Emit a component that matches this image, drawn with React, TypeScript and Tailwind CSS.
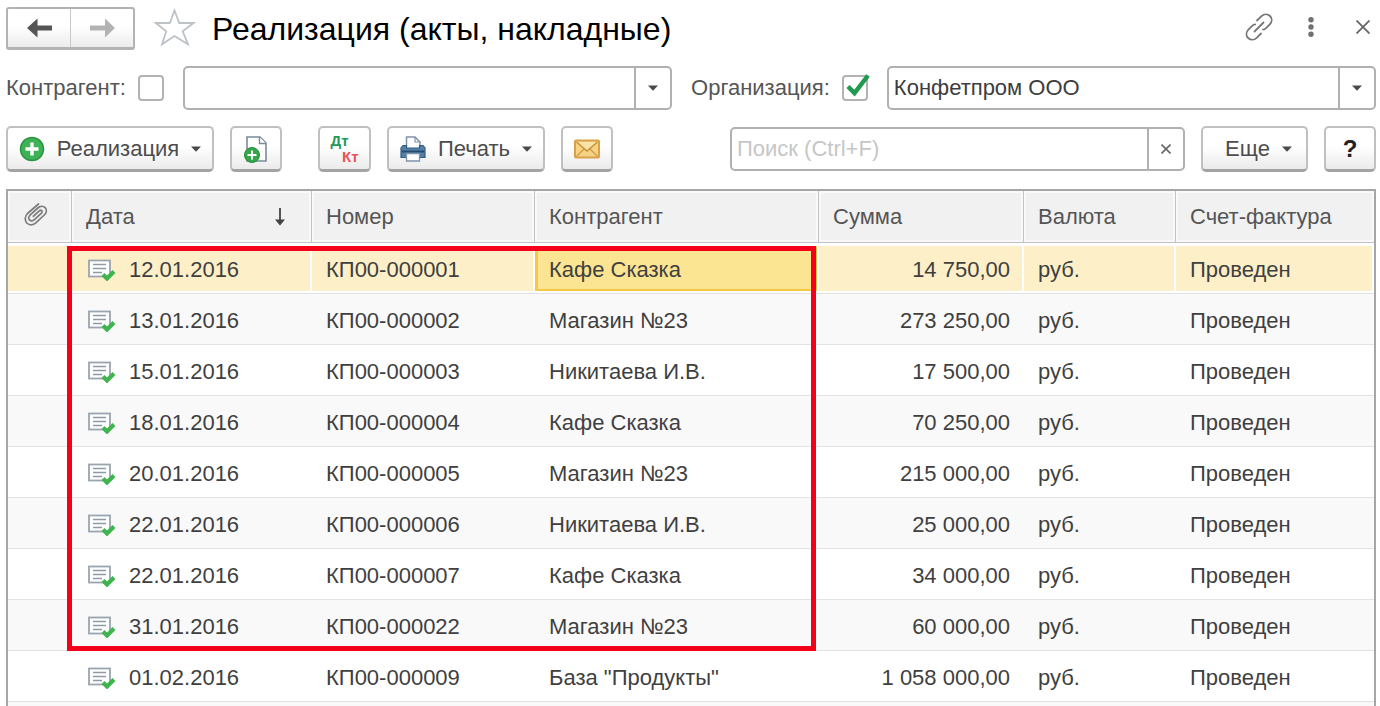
import { useState } from "react";
import type { ReactNode } from "react";

const documents = [
  { date: "12.01.2016", number: "КП00-000001", partner: "Кафе Сказка", sum: "14 750,00" },
  { date: "13.01.2016", number: "КП00-000002", partner: "Магазин №23", sum: "273 250,00" },
  { date: "15.01.2016", number: "КП00-000003", partner: "Никитаева И.В.", sum: "17 500,00" },
  { date: "18.01.2016", number: "КП00-000004", partner: "Кафе Сказка", sum: "70 250,00" },
  { date: "20.01.2016", number: "КП00-000005", partner: "Магазин №23", sum: "215 000,00" },
  { date: "22.01.2016", number: "КП00-000006", partner: "Никитаева И.В.", sum: "25 000,00" },
  { date: "22.01.2016", number: "КП00-000007", partner: "Кафе Сказка", sum: "34 000,00" },
  { date: "31.01.2016", number: "КП00-000022", partner: "Магазин №23", sum: "60 000,00" },
  { date: "01.02.2016", number: "КП00-000009", partner: 'База "Продукты"', sum: "1 058 000,00" },
];

const selectedCell =
  "bg-[#fdf0c9] shadow-[inset_-2px_-2px_0_0_#fff,inset_0_3px_0_0_#fff]";
const activeCell =
  "bg-[#fbe492] shadow-[inset_-2px_-2px_0_0_#fff,inset_0_3px_0_0_#fff,inset_3px_5px_0_0_#f5c943,inset_-4px_-4px_0_0_#f5c943]";

function Caret() {
  return (
    <svg width="10" height="6" viewBox="0 0 10 6" className="shrink-0" aria-hidden="true">
      <path d="M0 0.5h10L5 5.8z" fill="#4a4a4a" />
    </svg>
  );
}

function ToolButton({ label, className, children }: { label?: string; className: string; children: ReactNode }) {
  return (
    <button
      type="button"
      aria-label={label}
      className={`flex h-[46px] shrink-0 items-center justify-center rounded-[5px] border-2 border-b-[3px] border-[#c0c0c0] border-b-[#a3a3a3] bg-linear-to-b from-white from-45% to-[#ebebeb] text-[#4d4d4d] ${className}`}
    >
      {children}
    </button>
  );
}

function FilterCheckbox({ id, label, checked, onChange }: { id: string; label: string; checked: boolean; onChange: (v: boolean) => void }) {
  return (
    <div className="flex shrink-0 items-center gap-3">
      <label htmlFor={id} className="text-[#555]">
        {label}
      </label>
      <span className="relative flex">
        <input
          id={id}
          type="checkbox"
          checked={checked}
          onChange={(e) => onChange(e.target.checked)}
          className="size-[26px] appearance-none rounded-[4px] border-2 border-[#b3b3b3] bg-white"
        />
        {checked && (
          <svg width="26" height="26" viewBox="0 0 26 26" className="pointer-events-none absolute inset-0 overflow-visible" aria-hidden="true">
            <path d="M6 11.5l6.500 6.500L26 0.500" fill="none" stroke="#1f9a4f" strokeWidth="4.500" />
          </svg>
        )}
      </span>
    </div>
  );
}

function Combo({ label, value }: { label: string; value: string }) {
  return (
    <div className="relative flex h-11 min-w-0 flex-1">
      <select
        aria-label={label}
        defaultValue={value}
        className="w-full appearance-none rounded-[5px] border-2 border-[#b0b0b0] bg-white pr-10 pl-[5px] text-[#3d3d3d]"
      >
        <option value={value}>{value}</option>
      </select>
      <span className="pointer-events-none absolute inset-y-0.5 right-0.5 flex w-9 items-center justify-center border-l-2 border-[#b0b0b0]">
        <Caret />
      </span>
    </div>
  );
}

function DocumentIcon() {
  return (
    <svg width="28" height="22" viewBox="0 0 28 22" className="shrink-0" aria-hidden="true">
      <rect x="1" y="1.500" width="21" height="16" fill="#fff" stroke="#9aa5b0" strokeWidth="1.800" />
      <path d="M5 5.500h13M5 9.500h13M5 13.500h9" stroke="#8e9aa6" strokeWidth="1.600" />
      <path d="M15 15.500l4 4 7-7" fill="none" stroke="#3fb44f" strokeWidth="4.200" />
    </svg>
  );
}

function PaperclipIcon() {
  return (
    <svg width="24" height="24" viewBox="0 0 24 24" className="mx-auto" fill="none" stroke="#7c7c7c" strokeWidth="1.700" strokeLinecap="round" aria-hidden="true">
      <path d="M14.500 1L3.500 10.500C0.800 13 0.500 17.500 2.800 20c2.400 2.500 6.400 2.300 9-.1l8.500-7.900c2.400-2.300 2.700-5.400.8-7.400-1.900-2-5-1.700-7.300.4L6.300 11.800c-1.900 1.800-2 3.900-.8 5.100 1.300 1.300 3.400 1.200 5.200-.5l6.500-6c1-1 1.200-2 .5-2.700-.7-.7-1.700-.5-2.700.4L9.300 13.300" />
    </svg>
  );
}

function Header() {
  return (
    <header className="flex h-[43px] items-center">
      <div className="flex h-[43px] w-[129px] shrink-0 rounded-[3px] border-2 border-b-[3px] border-[#b3b3b3] bg-linear-to-b from-white from-45% to-[#ececec]">
        <button type="button" aria-label="Назад" className="flex flex-1 items-center justify-center border-r border-[#c9c9c9]">
          <svg width="25" height="20" viewBox="0 0 25 20" aria-hidden="true">
            <path d="M0 10L10.500 0.500v7H25v5H10.500v7z" fill="#555" />
          </svg>
        </button>
        <button type="button" aria-label="Вперед" className="flex flex-1 items-center justify-center">
          <svg width="25" height="20" viewBox="0 0 25 20" aria-hidden="true">
            <path d="M25 10L15 0.500v7H0v5h15v7z" fill="#b3b3b3" />
          </svg>
        </button>
      </div>
      <button type="button" aria-label="Избранное" className="ml-[19px] shrink-0 pb-1">
        <svg width="42" height="38" viewBox="0 0 42 38" fill="#fff" stroke="#bcc2c7" strokeWidth="1.800" aria-hidden="true">
          <path d="M20.500 2.500l4.800 12.500H39.500L28.700 23.300l5.300 13-13.500-8.300L8 36.300l4.300-13L1.800 15h14z" />
        </svg>
      </button>
      <h1 className="ml-4 text-[32px] leading-10 whitespace-nowrap text-black">Реализация (акты, накладные)</h1>
      <div className="ml-auto flex items-center pr-1.5 pb-1">
        <button type="button" aria-label="Ссылка" className="mr-[35px]">
          <svg width="28" height="28" viewBox="0 0 28 28" fill="none" stroke="#777" strokeWidth="1.800" strokeLinecap="round" aria-hidden="true">
            <path d="M12 7.500l4.500-4.300c2.600-2.500 6.200-2.500 8.500-.2 2.300 2.300 2.300 5.800-.2 8.400l-4 4c-.9.800-1.800 1.200-2.800 1.300" />
            <path d="M16 20.500l-4.300 4.300c-2.600 2.500-6.200 2.500-8.500.2-2.300-2.300-2.300-5.800.2-8.400l4-4c.9-.8 1.800-1.200 2.800-1.300" />
            <path d="M9.500 18.500l9-9" />
          </svg>
        </button>
        <button type="button" aria-label="Меню" className="mr-[42px]">
          <svg width="6" height="20" viewBox="0 0 6 20" fill="#707070" aria-hidden="true">
            <circle cx="3" cy="2.800" r="2.700" />
            <circle cx="3" cy="10" r="2.700" />
            <circle cx="3" cy="17.200" r="2.700" />
          </svg>
        </button>
        <button type="button" aria-label="Закрыть">
          <svg width="14" height="14" viewBox="0 0 14 14" stroke="#666" strokeWidth="1.800" aria-hidden="true">
            <path d="M0.500 0.500l13 13M13.500 0.500l-13 13" />
          </svg>
        </button>
      </div>
    </header>
  );
}

function Toolbar() {
  return (
    <div className="mt-4 flex items-center gap-4">
      <ToolButton className="w-[208px] gap-3">
        <svg width="26" height="26" viewBox="0 0 26 26" aria-hidden="true">
          <circle cx="13" cy="13" r="11.500" fill="#3fb257" stroke="#2b9440" strokeWidth="1.500" />
          <path d="M13 6.500v13M6.500 13h13" stroke="#fff" strokeWidth="3.400" />
        </svg>
        Реализация
        <Caret />
      </ToolButton>
      <ToolButton label="Скопировать" className="w-[52px]">
        <svg width="26" height="28" viewBox="0 0 26 28" aria-hidden="true">
          <path d="M4 2h13l6 6v18H4z" fill="#fff" stroke="#7b8a99" strokeWidth="1.600" />
          <path d="M16.500 2v6.500H23" fill="#fff" stroke="#7b8a99" strokeWidth="1.400" />
          <circle cx="9" cy="20" r="7.500" fill="#34a64a" stroke="#268a3a" />
          <path d="M9 15.500v9M4.500 20h9" stroke="#fff" strokeWidth="2" />
        </svg>
      </ToolButton>
      <ToolButton label="Движения документа" className="ml-5 w-[53px]">
        <span className="flex w-7 flex-col text-[15px] leading-4 font-bold">
          <span className="text-left text-[#26985a]">Дт</span>
          <span className="text-right text-[#e8545a]">Кт</span>
        </span>
      </ToolButton>
      <ToolButton className="w-[158px] gap-3">
        <svg width="26" height="26" viewBox="0 0 26 26" aria-hidden="true">
          <path d="M6.500 10V1h8.500l5 5v4" fill="#fff" stroke="#7e93a8" strokeWidth="1.500" />
          <path d="M15 1v5h5" fill="none" stroke="#7e93a8" strokeWidth="1.200" />
          <path d="M3 9.500h3.500v2.500h13V9.500H23l2 2.500v9.500H1V12z" fill="#5580a8" stroke="#315b83" strokeWidth="1.200" />
          <path d="M2 15.500h22" stroke="#274c70" strokeWidth="2" />
          <path d="M6.500 17.500h13v7.500h-13z" fill="#fff" stroke="#7e93a8" strokeWidth="1.300" />
        </svg>
        Печать
        <Caret />
      </ToolButton>
      <ToolButton label="Отправить по почте" className="w-[52px]">
        <svg width="26" height="20" viewBox="0 0 26 20" aria-hidden="true">
          <rect x="1" y="1.500" width="24" height="17" rx="1" fill="#f6d285" stroke="#d9a24a" strokeWidth="2" />
          <path d="M2.500 17.500l8-8M23.500 17.500l-8-8" stroke="#d29a3c" strokeWidth="1.200" />
          <path d="M2.500 3L13 12 23.500 3" fill="#fbe3a8" stroke="#c98f35" strokeWidth="1.400" />
        </svg>
      </ToolButton>
      <div className="ml-auto flex h-11 w-[455px] rounded-[5px] border-2 border-[#b0b0b0] bg-white">
        <input
          type="text"
          aria-label="Поиск"
          placeholder="Поиск (Ctrl+F)"
          className="min-w-0 flex-1 px-[5px] text-[#3d3d3d] outline-none placeholder:text-[#c6c6c6]"
        />
        <button type="button" aria-label="Очистить" className="flex w-9 items-center justify-center border-l-2 border-[#b0b0b0]">
          <svg width="10" height="10" viewBox="0 0 10 10" stroke="#666" strokeWidth="1.600" aria-hidden="true">
            <path d="M0.500 0.500l9 9M9.500 0.500l-9 9" />
          </svg>
        </button>
      </div>
      <ToolButton className="w-[107px] gap-3 pl-2">
        Еще
        <Caret />
      </ToolButton>
      <ToolButton label="Справка" className="w-[52px]">
        <span className="text-2xl font-bold text-[#222]">?</span>
      </ToolButton>
    </div>
  );
}

function HeadCell({ children }: { children: ReactNode }) {
  return (
    <th
      scope="col"
      className="h-[52px] border-r border-b border-[#c2c2c8] bg-[#f1f1f1] px-[14px] text-left font-normal text-[#555] shadow-[inset_0_0_0_2px_#f9f9f9] last:border-r-0"
    >
      {children}
    </th>
  );
}

function DocumentsTable() {
  return (
    <div className="relative mt-[17px] min-h-0 flex-1 overflow-hidden border-2 border-b-0 border-[#a6a6a6]">
      <table className="w-full table-fixed border-separate border-spacing-0 whitespace-nowrap">
        <colgroup>
          <col className="w-16" />
          <col className="w-60" />
          <col className="w-[223px]" />
          <col className="w-[284px]" />
          <col className="w-[205px]" />
          <col className="w-[152px]" />
          <col />
        </colgroup>
        <thead>
          <tr>
            <th scope="col" aria-label="Файлы" className="h-[52px] border-r border-b border-[#c2c2c8] bg-[#f1f1f1] pr-2 pb-1 shadow-[inset_0_0_0_2px_#f9f9f9]">
              <PaperclipIcon />
            </th>
            <HeadCell>
              <span className="flex items-center justify-between pr-3">
                Дата
                <svg width="10" height="18" viewBox="0 0 10 18" aria-hidden="true">
                  <path d="M5 0v14" stroke="#444" strokeWidth="1.800" />
                  <path d="M0 11.500h10L5 17.500z" fill="#444" />
                </svg>
              </span>
            </HeadCell>
            <HeadCell>Номер</HeadCell>
            <HeadCell>Контрагент</HeadCell>
            <HeadCell>Сумма</HeadCell>
            <HeadCell>Валюта</HeadCell>
            <HeadCell>Счет-фактура</HeadCell>
          </tr>
        </thead>
        <tbody className="text-[#3f3f3f]">
          {documents.map((doc, i) => {
            const base = "h-[51px] border-b border-[#e3e3e3] px-[14px] pt-[3px]";
            const cell = `${base} ${i === 0 ? selectedCell : ""}`;
            return (
              <tr key={doc.number} className="odd:bg-white even:bg-[#f9f9f9]">
                <td className={cell} />
                <td className={cell}>
                  <span className="flex items-center gap-[13px] pl-0.5">
                    <DocumentIcon />
                    {doc.date}
                  </span>
                </td>
                <td className={cell}>{doc.number}</td>
                <td className={i === 0 ? `${base} ${activeCell}` : cell}>{doc.partner}</td>
                <td className={`${cell} text-right`}>{doc.sum}</td>
                <td className={cell}>руб.</td>
                <td className={cell}>Проведен</td>
              </tr>
            );
          })}
          <tr className="bg-[#f9f9f9]">
            <td colSpan={7} className="h-[51px]" />
          </tr>
        </tbody>
      </table>
      {/* frame around the January documents */}
      <div className="pointer-events-none absolute top-[55px] left-[59px] h-[405px] w-[749px] border-[5px] border-[#f5001b]" />
    </div>
  );
}

export default function App() {
  const [byPartner, setByPartner] = useState(false);
  const [byCompany, setByCompany] = useState(true);

  return (
    <main className="flex h-screen flex-col overflow-hidden bg-white pt-[7px] pr-1 pl-1.5 font-['Liberation_Sans',Arial,sans-serif] text-[22px] leading-7">
      <Header />
      <div className="mt-4 flex items-center gap-[19px]">
        <FilterCheckbox id="by-partner" label="Контрагент:" checked={byPartner} onChange={setByPartner} />
        <Combo label="Контрагент" value="" />
        <FilterCheckbox id="by-company" label="Организация:" checked={byCompany} onChange={setByCompany} />
        <Combo label="Организация" value="Конфетпром ООО" />
      </div>
      <Toolbar />
      <DocumentsTable />
    </main>
  );
}
